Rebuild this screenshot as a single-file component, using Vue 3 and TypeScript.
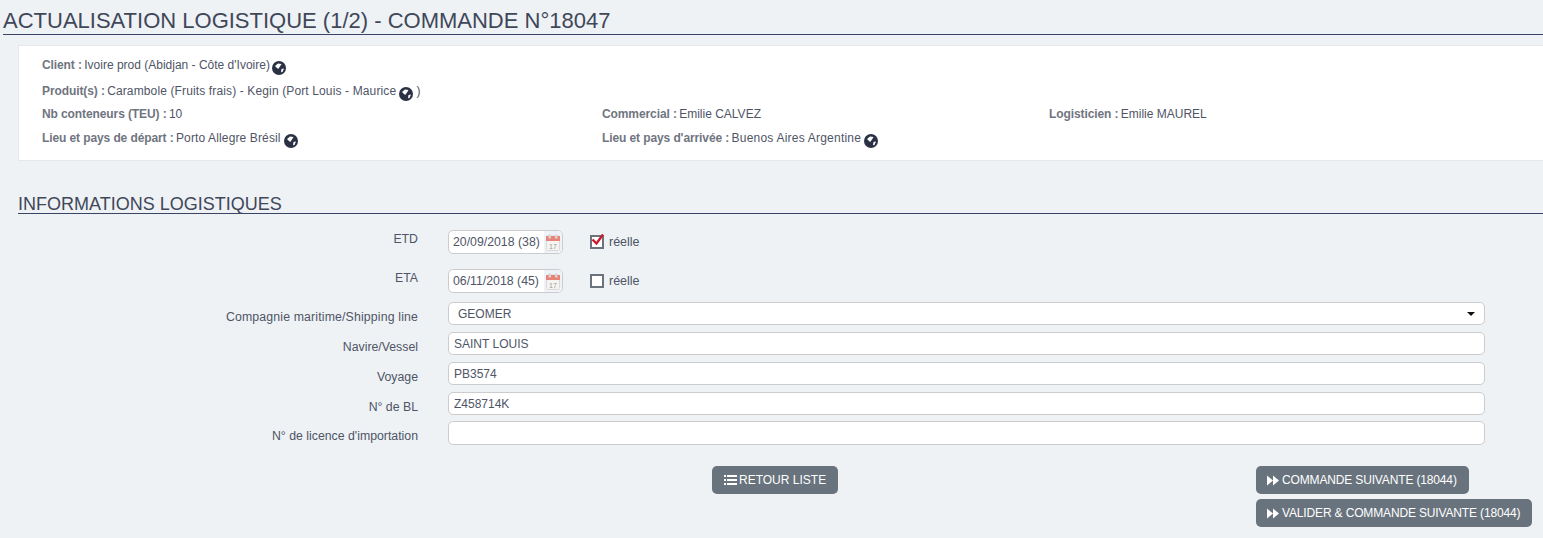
<script setup lang="ts">
const rows = [
  { label: 'Navire/Vessel', value: 'SAINT LOUIS' },
  { label: 'Voyage', value: 'PB3574' },
  { label: 'N° de BL', value: 'Z458714K' },
  { label: "N° de licence d'importation", value: '' },
]
const dates = [
  { label: 'ETD', value: '20/09/2018 (38)', checked: true },
  { label: 'ETA', value: '06/11/2018 (45)', checked: false },
]
</script>

<template>
  <div class="page">
    <h1 class="title">ACTUALISATION LOGISTIQUE (1/2) - COMMANDE N°18047</h1>

    <section class="card">
      <p class="line l1"><b>Client :</b> Ivoire prod (Abidjan - Côte d'Ivoire)
        <svg class="globe" viewBox="0 0 14 14"><circle cx="7" cy="7" r="7" fill="#2b3145"/><path d="M3 5 6 2.500l3.500.5L8 5.500 6.200 8 4.500 6.500zM9.500 8l2.500-.5-1.500 3.500-1.500.2z" fill="#fff"/></svg>
      </p>
      <p class="line l2"><b>Produit(s) :</b> <span class="loose">Carambole (Fruits frais) - Kegin (Port Louis - Maurice</span>
        <svg class="globe" viewBox="0 0 14 14"><circle cx="7" cy="7" r="7" fill="#2b3145"/><path d="M3 5 6 2.500l3.500.5L8 5.500 6.200 8 4.500 6.500zM9.500 8l2.500-.5-1.500 3.500-1.500.2z" fill="#fff"/></svg> )
      </p>
      <div class="info-grid l3">
        <span><b>Nb conteneurs (TEU) :</b> 10</span>
        <span><b>Commercial :</b> Emilie CALVEZ</span>
        <span><b>Logisticien :</b> Emilie MAUREL</span>
      </div>
      <div class="info-grid l4">
        <span><b>Lieu et pays de départ :</b> <span class="loose">Porto Allegre Brésil</span>
          <svg class="globe" viewBox="0 0 14 14"><circle cx="7" cy="7" r="7" fill="#2b3145"/><path d="M3 5 6 2.500l3.500.5L8 5.500 6.200 8 4.500 6.500zM9.500 8l2.500-.5-1.500 3.500-1.500.2z" fill="#fff"/></svg>
        </span>
        <span><b>Lieu et pays d'arrivée :</b> <span class="loose wider">Buenos Aires Argentine</span>
          <svg class="globe" viewBox="0 0 14 14"><circle cx="7" cy="7" r="7" fill="#2b3145"/><path d="M3 5 6 2.500l3.500.5L8 5.500 6.200 8 4.500 6.500zM9.500 8l2.500-.5-1.500 3.500-1.500.2z" fill="#fff"/></svg>
        </span>
      </div>
    </section>

    <h2 class="subtitle">INFORMATIONS LOGISTIQUES</h2>

    <form class="form" @submit.prevent>
      <div v-for="d in dates" :key="d.label" class="row date-row">
        <label class="label date-label">{{ d.label }}</label>
        <div class="date-field">
          <span class="date-value">{{ d.value }}</span>
          <span class="cal-wrap">
            <svg class="cal" viewBox="0 0 14 17">
              <rect x="0.500" y="2" width="13" height="14.500" rx="1" fill="#f6f4f0" stroke="#dcd8d4"/>
              <rect x="0" y="2" width="14" height="5" fill="#e8837a"/>
              <rect x="2.500" y="0.500" width="2.500" height="4" fill="#d9d6d2"/>
              <rect x="9" y="0.500" width="2.500" height="4" fill="#d9d6d2"/>
              <text x="7" y="14.500" text-anchor="middle" class="cal-day">17</text>
            </svg>
          </span>
        </div>
        <span class="check">
          <svg v-if="d.checked" class="tick" viewBox="0 0 16 16"><path d="M1.500 7.500 5.500 11.500 12 2.500" fill="none" stroke="#cf1730" stroke-width="2.400"/></svg>
        </span>
        <span class="check-label">réelle</span>
      </div>

      <div class="row select-row">
        <label class="label">Compagnie maritime/Shipping line</label>
        <div class="control select">
          <span>GEOMER</span>
          <i class="caret"></i>
        </div>
      </div>

      <div v-for="r in rows" :key="r.label" class="row input-row">
        <label class="label">{{ r.label }}</label>
        <div class="control">{{ r.value }}</div>
      </div>

      <div class="actions">
        <button type="button" class="btn back">
          <svg class="ico-list" viewBox="0 0 13 10"><path d="M0 0h2v2H0zM3 0h10v2H3zM0 4h2v2H0zM3 4h10v2H3zM0 8h2v2H0zM3 8h10v2H3z" fill="#fff"/></svg>
          RETOUR LISTE
        </button>
        <div class="next">
          <button type="button" class="btn">
            <svg class="ico-ff" viewBox="0 0 13 11"><path d="M0 0l6.500 5.500L0 11zM6.500 0l6.500 5.500L6.500 11z" fill="#fff"/></svg>
            COMMANDE SUIVANTE (18044)
          </button>
          <button type="button" class="btn">
            <svg class="ico-ff" viewBox="0 0 13 11"><path d="M0 0l6.500 5.500L0 11zM6.500 0l6.500 5.500L6.500 11z" fill="#fff"/></svg>
            VALIDER &amp; COMMANDE SUIVANTE (18044)
          </button>
        </div>
      </div>
    </form>
  </div>
</template>

<style>
html, body { margin: 0; background: #eef2f5; overflow: hidden; }
</style>

<style scoped>
.page {
  width: 1543px;
  height: 538px;
  overflow: hidden;
  box-sizing: border-box;
  padding-top: 8px;
  font-family: "Liberation Sans", Arial, sans-serif;
  font-size: 12px;
  color: #4f5566;
  background: #eef2f5;
}
.title {
  margin: 0 0 10px 3px;
  font-size: 22px;
  line-height: 26px;
  font-weight: 400;
  color: #3f4759;
  border-bottom: 1px solid #3a4466;
}
.card {
  margin-left: 18px;
  height: 116px;
  box-sizing: border-box;
  padding: 12px 23px 0;
  background: #fff;
  border: 1px solid #e4e8ec;
  border-right: 0;
}
.line { margin: 0; height: 14px; line-height: 14px; }
.l2 { margin-top: 12px; }
.l3 { margin-top: 9px; }
.l4 { margin-top: 10px; }
.line b, .info-grid b {
  font-weight: 700;
  color: #70757f;
  letter-spacing: -0.1px;
  margin-right: -1px;
}
.loose { letter-spacing: 0.13px; }
.wider { letter-spacing: 0.22px; }
.info-grid {
  display: grid;
  grid-template-columns: 560px 447px 1fr;
  height: 14px;
  line-height: 14px;
}
.globe { width: 14px; height: 14px; vertical-align: -6px; margin-left: -1px; }
.loose + .globe { margin-left: 3px; }
.subtitle {
  margin: 34px 0 0 18px;
  font-size: 18px;
  line-height: 18px;
  font-weight: 400;
  color: #3f4759;
  border-bottom: 1px solid #3a4466;
}
.form { padding-top: 16px; }
.row { display: flex; align-items: center; }
.label {
  width: 418px;
  flex: none;
  text-align: right;
  margin-right: 30px;
  font-size: 12.3px;
  color: #4f5566;
}
.date-row { height: 24px; margin-bottom: 15px; }
.date-label { align-self: flex-start; padding-top: 2px; }
.select-row .label, .input-row .label { padding-top: 6px; }
.select-row .label { letter-spacing: 0.15px; }
.date-field {
  width: 115px;
  height: 24px;
  box-sizing: border-box;
  display: flex;
  align-items: center;
  justify-content: space-between;
  background: #fff;
  border: 1px solid #ccc;
  border-radius: 5px;
  overflow: hidden;
  padding-left: 4px;
  font-size: 12.3px;
}
.date-value { color: #4f5566; }
.cal-wrap {
  width: 18px;
  height: 100%;
  background: #eef2f9;
  display: flex;
  align-items: center;
  justify-content: center;
}
.cal { width: 14px; height: 17px; }
.cal-day { font: 7px "Liberation Sans", Arial, sans-serif; fill: #9a9a9a; }
.check {
  width: 14px;
  height: 14px;
  box-sizing: border-box;
  border: 2px solid #6b747d;
  background: #fff;
  margin-left: 27px;
  position: relative;
}
.tick { position: absolute; left: -1px; top: -5px; width: 16px; height: 16px; }
.check-label { margin-left: 5px; font-size: 12.5px; }
.select-row { margin-top: -6px; height: 23px; }
.control {
  width: 1037px;
  flex: none;
  box-sizing: border-box;
  height: 23px;
  line-height: 22px;
  padding-left: 5px;
  background: #fff;
  border: 1px solid #ccc;
  border-radius: 5px;
  color: #4f5566;
}
.select {
  display: flex;
  align-items: center;
  justify-content: space-between;
  padding: 1px 9px 0;
}
.caret {
  border-left: 4px solid transparent;
  border-right: 4px solid transparent;
  border-top: 4px solid #111;
}
.input-row { margin-top: 7px; }
.input-row:nth-child(7) { margin-top: 6px; }
.input-row:nth-child(7) .control { height: 24px; }
.actions { display: flex; align-items: flex-start; padding: 21px 11px 0 712px; justify-content: space-between; }
.btn {
  height: 28px;
  box-sizing: border-box;
  padding: 0 12px;
  background: #68737d;
  color: #fff;
  border: 0;
  border-radius: 5px;
  font: 12px "Liberation Sans", Arial, sans-serif;
  letter-spacing: -0.15px;
  white-space: nowrap;
  display: inline-flex;
  align-items: center;
}
.back { letter-spacing: 0; }
.next { display: flex; flex-direction: column; align-items: flex-start; gap: 5px; width: 276px; }
.next .btn { padding-left: 11px; }
.ico-list { width: 13px; height: 10px; margin-right: 2px; }
.ico-ff { width: 12px; height: 11px; margin-right: 3px; }
</style>
